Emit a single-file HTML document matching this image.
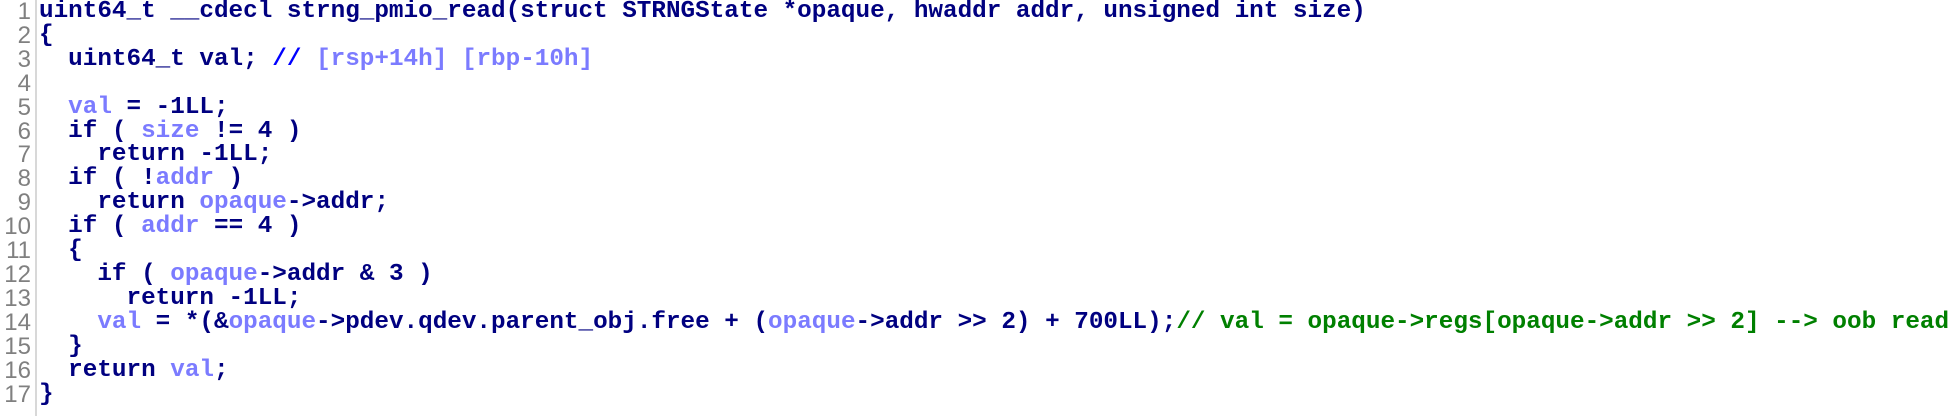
<!DOCTYPE html>
<html><head><meta charset="utf-8"><style>
html,body{margin:0;padding:0;background:#fff;width:1954px;height:416px;overflow:hidden}
.wrap{position:relative;width:1954px;height:416px}
.ln{position:absolute;left:0;top:0;width:31px;text-align:right;font-family:"Liberation Sans",sans-serif;font-size:24px;color:#808080;line-height:23.9px}
.bar{position:absolute;left:35px;top:0;width:2px;height:416px;background:#d8d8d8}
pre{position:absolute;left:39px;top:0;margin:0;font-family:"Liberation Mono",monospace;font-weight:bold;font-size:24.3px;line-height:23.9px;color:#000080}
.v{color:#7b7bff}.c{color:#0000ff}.g{color:#008000}
</style></head><body><div class="wrap">
<div class="ln">1<br>2<br>3<br>4<br>5<br>6<br>7<br>8<br>9<br>10<br>11<br>12<br>13<br>14<br>15<br>16<br>17</div>
<div class="bar"></div>
<pre>uint64_t __cdecl strng_pmio_read(struct STRNGState *opaque, hwaddr addr, unsigned int size)
{
  uint64_t val; <span class="c">//</span> <span class="v">[rsp+14h] [rbp-10h]</span>

  <span class="v">val</span> = -1LL;
  if ( <span class="v">size</span> != 4 )
    return -1LL;
  if ( !<span class="v">addr</span> )
    return <span class="v">opaque</span>-&gt;addr;
  if ( <span class="v">addr</span> == 4 )
  {
    if ( <span class="v">opaque</span>-&gt;addr &amp; 3 )
      return -1LL;
    <span class="v">val</span> = *(&amp;<span class="v">opaque</span>-&gt;pdev.qdev.parent_obj.free + (<span class="v">opaque</span>-&gt;addr &gt;&gt; 2) + 700LL);<span class="g">// val = opaque-&gt;regs[opaque-&gt;addr &gt;&gt; 2] --&gt; oob read</span>
  }
  return <span class="v">val</span>;
}</pre>
</div></body></html>
